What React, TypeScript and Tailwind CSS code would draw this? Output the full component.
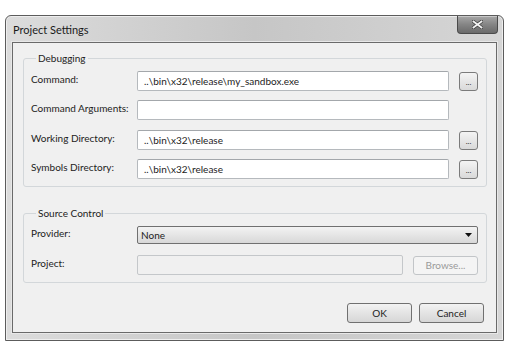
import React from 'react';

const font = { fontFamily: 'Lato, "Noto Sans", Arial, sans-serif' };

const inputCls = 'h-[20px] bg-white border border-[#b5b9bd] border-t-[#a3a7ab] rounded-[2px] px-[6px] text-[10px] text-[#222] flex items-center whitespace-nowrap';
const labelCls = 'w-[106px] pb-[5px] text-[10px] leading-[12px] text-[#222] whitespace-nowrap';

const DotsButton: React.FC = () => (
  <button className="w-[19px] h-[19px] ml-[10px] rounded-[3px] border border-[#7b7b7b] bg-gradient-to-b from-[#f4f4f4] to-[#d9d9d9] flex items-end justify-center pb-[4px]">
    <span className="text-[8px] leading-none text-[#333]">...</span>
  </button>
);

const Row: React.FC<{ label: string; value?: string; dots?: boolean; className?: string }> = ({ label, value, dots, className }) => (
  <div className={`flex items-center ${className ?? ''}`}>
    <span className={labelCls}>{label}</span>
    <div className={`${inputCls} w-[312px]`}>{value}</div>
    {dots && <DotsButton />}
  </div>
);

const GroupBox: React.FC<{ title: string; children: React.ReactNode; className?: string }> = ({ title, children, className }) => (
  <fieldset className={`border border-[#d3d7da] rounded-[3px] pl-[7px] pr-[8px] ${className ?? ''}`}>
    <legend className="ml-[5px] px-[2px] text-[10px] leading-[14px] text-[#222]">{title}</legend>
    {children}
  </fieldset>
);

const App: React.FC = () => {
  return (
    <div className="w-[514px] h-[354px] bg-white pt-[15px] pl-[5px]" style={font}>
      <div className="w-[499px] h-[326px] flex flex-col rounded-t-[6px] border border-[#5c5c5c] bg-gradient-to-r from-[#dcdcdc] via-[#c6c6c6] to-[#d6d6d6] px-[6px] pb-[7px] shadow-[inset_0_0_0_1px_#eeeeee]">
        <div className="h-[26px] flex items-start justify-between">
          <span className="pl-[1px] pt-[7px] text-[11px] leading-[14px] text-[#1a1a1a]">Project Settings</span>
          <button className="w-[41px] h-[18px] -mr-[1px] rounded-b-[4px] border border-t-0 border-[#4a4a4a] bg-gradient-to-b from-[#a8a8a8] via-[#858585] to-[#6a6a6a] flex items-center justify-center shadow-[inset_0_1px_0_#c8c8c8]">
            <svg width="11" height="9" viewBox="0 0 11 9">
              <path d="M1.5 1.5 L9.5 7.5 M9.5 1.5 L1.5 7.5" stroke="#404040" strokeWidth="3.4" strokeLinecap="square" />
              <path d="M1.5 1.5 L9.5 7.5 M9.5 1.5 L1.5 7.5" stroke="#f2f2f2" strokeWidth="1.8" strokeLinecap="square" />
            </svg>
          </button>
        </div>
        <div className="flex-1 flex flex-col border border-[#6a6a6a] shadow-[0_0_0_1px_#e8e8e8] bg-[#f0f0f0] pl-[10px] pr-[9px]">
          <GroupBox title="Debugging" className="mt-[8px] pb-[7px]">
            <div className="flex flex-col gap-[9px] pt-[6px]">
              <Row label="Command:" value={'..\\bin\\x32\\release\\my_sandbox.exe'} dots />
              <Row label="Command Arguments:" className="h-[20px]" />
              <Row label="Working Directory:" value={'..\\bin\\x32\\release'} dots className="mt-[1px]" />
              <Row label="Symbols Directory:" value={'..\\bin\\x32\\release'} dots />
            </div>
          </GroupBox>
          <GroupBox title="Source Control" className="mt-[19px] pb-[7px]">
            <div className="flex flex-col pt-[6px]">
              <div className="flex items-center">
                <span className={labelCls}>Provider:</span>
                <div className="w-[341px] h-[18px] rounded-[2px] border border-[#707070] bg-gradient-to-b from-[#f3f3f3] to-[#d8d8d8] flex items-center justify-between pl-[3px] pr-[5px]">
                  <span className="text-[10px] text-[#222]">None</span>
                  <svg width="7" height="4" viewBox="0 0 7 4"><path d="M0 0 H7 L3.5 4 Z" fill="#111" /></svg>
                </div>
              </div>
              <div className="flex items-center mt-[11px]">
                <span className={labelCls}>Project:</span>
                <div className="w-[266px] h-[20px] rounded-[2px] border border-[#c4c7ca] bg-[#f0f0f0]" />
                <button className="ml-[10px] w-[65px] h-[19px] rounded-[3px] border border-[#c2c5c8] bg-[#f4f4f4] text-[10px] text-[#9a9a9a]">Browse...</button>
              </div>
            </div>
          </GroupBox>
          <div className="flex-1 flex items-end justify-end gap-[7px] pr-[3px] pb-[9px]">
            <button className="w-[65px] h-[20px] rounded-[3px] border border-[#707070] bg-gradient-to-b from-[#f2f2f2] to-[#d6d6d6] text-[10px] text-[#222]">OK</button>
            <button className="w-[65px] h-[20px] rounded-[3px] border border-[#707070] bg-gradient-to-b from-[#f2f2f2] to-[#d6d6d6] text-[10px] text-[#222]">Cancel</button>
          </div>
        </div>
      </div>
    </div>
  );
};

export default App;
